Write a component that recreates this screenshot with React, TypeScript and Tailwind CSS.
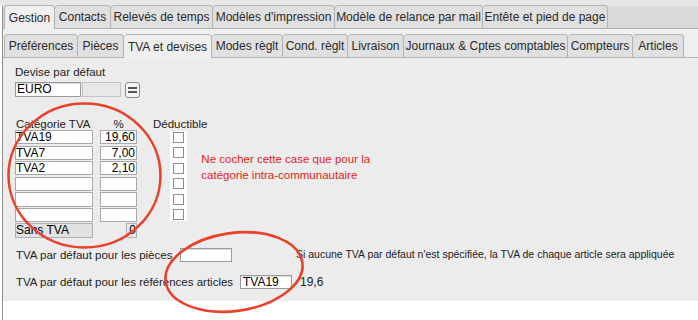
import React from "react";

const row1 = [
  { label: "Gestion", w: 51, active: true },
  { label: "Contacts", w: 56 },
  { label: "Relevés de temps", w: 102 },
  { label: "Modèles d'impression", w: 122 },
  { label: "Modèle de relance par mail", w: 148 },
  { label: "Entête et pied de page", w: 125 },
];

const row2 = [
  { label: "Préférences", w: 74 },
  { label: "Pièces", w: 46 },
  { label: "TVA et devises", w: 88, active: true },
  { label: "Modes règlt", w: 71 },
  { label: "Cond. règlt", w: 65 },
  { label: "Livraison", w: 56 },
  { label: "Journaux & Cptes comptables", w: 164 },
  { label: "Compteurs", w: 65 },
  { label: "Articles", w: 51 },
];

const cats = [
  { c: "TVA19", p: "19,60" },
  { c: "TVA7", p: "7,00" },
  { c: "TVA2", p: "2,10" },
  { c: "", p: "" },
  { c: "", p: "" },
  { c: "", p: "" },
];

function Tab({ label, w, active, first }: { label: string; w: number; active?: boolean; first?: boolean }) {
  return (
    <div
      style={{ width: w }}
      className={
        "flex items-center justify-center rounded-t-[4px] border-t border-r border-[#b3b3b3] text-[12px] text-[#2a2a2a] whitespace-nowrap " +
        (first ? "border-l " : "") +
        (active ? "bg-[#efefef] h-[24px] mb-[-1px] relative z-10" : "bg-[#e0e0e0] h-[23px]")
      }
    >
      {label}
    </div>
  );
}

export default function App() {
  return (
    <div
      className="relative w-[698px] h-[320px] overflow-hidden bg-white"
      style={{ fontFamily: '"Liberation Sans", Arial, sans-serif' }}
    >
      <div className="h-[6px] bg-[#e6e6e6]" />
      <div className="ml-[2px] border-l border-[#8c8c8c] h-[314px]">
        {/* first tab row */}
        <div className="flex items-end h-[23px] bg-[#d9d9d9] border-b border-[#b3b3b3] pl-[1px]">
          {row1.map((t, i) => (
            <Tab key={t.label} {...t} first={i === 0} />
          ))}
        </div>
        {/* second tab row */}
        <div className="bg-[#efefef] pt-[4px]">
          <div className="flex items-end h-[25px] border-b border-[#b3b3b3] pl-[1px]">
            {row2.map((t, i) => (
              <Tab key={t.label} {...t} first={i === 0} />
            ))}
          </div>
        </div>
        {/* panel */}
        <div className="bg-[#ececec] h-[243px] pl-[12px] pt-[7px] text-[11.5px] text-[#222]">
          <div className="leading-[14px]">Devise par défaut</div>
          <div className="flex items-center mt-[3px] h-[15px]">
            <div className="w-[66px] h-[15px] bg-white border border-[#9a9a9a] shadow-[inset_0_1px_1px_rgba(0,0,0,0.15)] text-[12px] leading-[13px] text-black pl-[1px]">
              EURO
            </div>
            <div className="ml-[1px] w-[39px] h-[15px] bg-[#e8e8e8] border border-[#c2c2c2]" />
            <div className="ml-[4px] w-[15px] h-[16px] rounded-[3px] border border-[#8a8a8a] bg-[#f4f4f4] flex flex-col items-center justify-center gap-[2px]">
              <div className="w-[9px] h-[2px] bg-[#555]" />
              <div className="w-[9px] h-[2px] bg-[#555]" />
            </div>
          </div>

          {/* table */}
          <div className="flex mt-[21px]">
            <div className="flex flex-col">
              <div className="flex h-[13px] leading-[13px]">
                <div className="w-[85px] pl-[1px]">Catégorie TVA</div>
                <div className="w-[37px] text-center">%</div>
              </div>
              <div className="flex flex-col gap-[1.4px] mt-[-1px]">
                {cats.map((r, i) => (
                  <div key={i} className="flex h-[14.2px]">
                    <div className="w-[78px] h-full bg-white border border-[#a8a8a8] text-[12px] leading-[12px] text-black">
                      {r.c}
                    </div>
                    <div className="ml-[7px] w-[37px] h-full bg-white border border-[#a8a8a8] text-[12px] leading-[12px] text-black text-right pr-[1px]">
                      {r.p}
                    </div>
                  </div>
                ))}
                <div className="flex h-[14.2px]">
                  <div className="w-[78px] h-full bg-[#e2e2e2] border border-[#b0b0b0] text-[12px] leading-[12px] text-black">
                    Sans TVA
                  </div>
                  <div className="ml-[33px] w-[11px] h-full bg-[#e8e8e8] border border-[#b0b0b0] text-[12px] leading-[12px] text-black text-right">
                    0
                  </div>
                </div>
              </div>
            </div>
            <div className="ml-[16px] flex flex-col">
              <div className="h-[13px] leading-[13px]">Déductible</div>
              <div className="ml-[17px] w-[17px] bg-white flex flex-col items-center gap-[4.4px] pt-[1px] pb-[1px]">
                {cats.map((_, i) => (
                  <div key={i} className="w-[11px] h-[11px] border border-[#8c8c8c] bg-white" />
                ))}
              </div>
            </div>
            <div className="ml-[-6px] mt-[33px] text-[#e0251b] leading-[16px]">
              Ne cocher cette case que pour la
              <br />
              catégorie intra-communautaire
            </div>
          </div>

          {/* bottom rows */}
          <div className="flex items-center mt-[10px] h-[15px]">
            <div className="w-[165px] pl-[1px]">TVA par défaut pour les pièces</div>
            <div className="w-[52px] h-[14px] bg-white border border-[#9a9a9a] shadow-[inset_0_1px_1px_rgba(0,0,0,0.15)]" />
            <div className="ml-[64px] text-[10.5px] text-[#222]">
              Si aucune TVA par défaut n'est spécifiée, la TVA de chaque article sera appliquée
            </div>
          </div>
          <div className="flex items-center mt-[12px] h-[15px]">
            <div className="w-[225px] pl-[1px]">TVA par défaut pour les références articles</div>
            <div className="w-[52px] h-[14px] bg-white border border-[#9a9a9a] shadow-[inset_0_1px_1px_rgba(0,0,0,0.15)] text-[12px] leading-[12px] text-black pl-[2px]">
              TVA19
            </div>
            <div className="ml-[8px] text-[12px]">19,6</div>
          </div>
        </div>
      </div>

      {/* red annotation circles */}
      <svg className="absolute left-0 top-0 pointer-events-none" width="698" height="320">
        <ellipse cx="84.5" cy="175.5" rx="76" ry="72" fill="none" stroke="#e8412c" strokeWidth="2.6" />
        <ellipse
          cx="234"
          cy="272"
          rx="69"
          ry="39"
          fill="none"
          stroke="#e8412c"
          strokeWidth="2.6"
          transform="rotate(-8 234 272)"
        />
      </svg>
    </div>
  );
}
